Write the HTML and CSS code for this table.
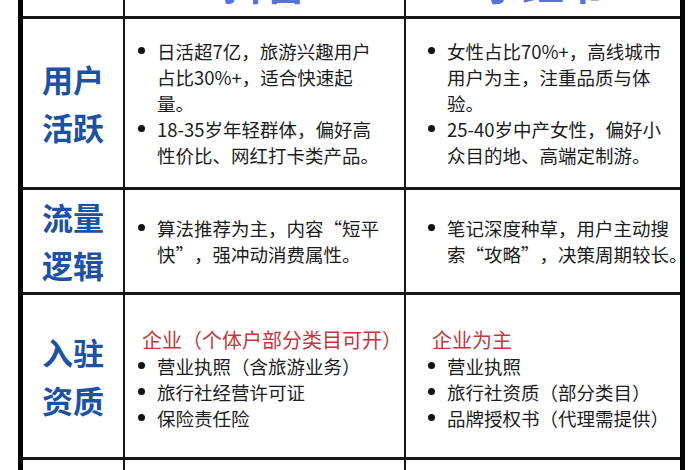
FILE: index.html
```html
<!DOCTYPE html>
<html lang="zh-CN">
<head>
<meta charset="utf-8">
<title>抖音 vs 小红书</title>
<link rel="stylesheet" href="styles.css">
</head>
<body>
<div class="sheet">
  <div class="cell head"></div>
  <div class="cell head">抖音</div>
  <div class="cell head">小红书</div>

  <div class="cell label">用户<br>活跃</div>
  <div class="cell body c2">
    <ul class="list">
      <li>日活超7亿，旅游兴趣用户<br>占比30%+，适合快速起<br>量。</li>
      <li>18-35岁年轻群体，偏好高<br>性价比、网红打卡类产品。</li>
    </ul>
  </div>
  <div class="cell body c3">
    <ul class="list">
      <li>女性占比70%+，高线城市<br>用户为主，注重品质与体<br>验。</li>
      <li>25-40岁中产女性，偏好小<br>众目的地、高端定制游。</li>
    </ul>
  </div>

  <div class="cell label">流量<br>逻辑</div>
  <div class="cell body c2">
    <ul class="list">
      <li>算法推荐为主，内容“短平<br>快”，强冲动消费属性。</li>
    </ul>
  </div>
  <div class="cell body c3">
    <ul class="list">
      <li>笔记深度种草，用户主动搜<br>索“攻略”，决策周期较长。</li>
    </ul>
  </div>

  <div class="cell label">入驻<br>资质</div>
  <div class="cell body c2 shift">
    <p class="req">企业（个体户部分类目可开）</p>
    <ul class="list">
      <li>营业执照（含旅游业务）</li>
      <li>旅行社经营许可证</li>
      <li>保险责任险</li>
    </ul>
  </div>
  <div class="cell body c3 shift">
    <p class="req">企业为主</p>
    <ul class="list">
      <li>营业执照</li>
      <li>旅行社资质（部分类目）</li>
      <li>品牌授权书（代理需提供）</li>
    </ul>
  </div>

  <div class="cell"></div>
  <div class="cell"></div>
  <div class="cell"></div>
</div>
</body>
</html>
```

FILE: styles.css
```css
* {
  box-sizing: border-box;
  margin: 0;
  padding: 0;
}

html, body {
  background: #ffffff;
}

body {
  margin: 0;
  overflow: hidden;
  font-family: "Noto Sans CJK SC", "Noto Sans", sans-serif;
  color: #1c1c1c;
}

.sheet {
  width: 667px;
  margin: -60px 0 0 18px;
  display: grid;
  grid-template-columns: 100px 279px 274px;
  grid-template-rows: 76px 168px 102px 162px 60px;
  gap: 3px 2px;
  background: #161616;
  border-left: 5px solid #050505;
  border-right: 5px solid #050505;
}

.cell {
  background: #ffffff;
  min-width: 0;
}

.head {
  display: flex;
  justify-content: center;
  align-items: flex-end;
  padding-bottom: 13px;
  font-size: 42px;
  line-height: 42px;
  font-weight: 700;
  color: #5670de;
}

.label {
  display: flex;
  align-items: center;
  justify-content: center;
  text-align: center;
  font-size: 31px;
  line-height: 48px;
  font-weight: 700;
  color: #1c51a3;
}

.body {
  display: flex;
  flex-direction: column;
  justify-content: center;
  font-size: 18.5px;
  line-height: 26px;
  white-space: nowrap;
  text-spacing-trim: space-all;
}

.c2 {
  padding-left: 13px;
}

.c3 {
  padding-left: 22px;
}

.shift {
  padding-top: 4px;
}

.list {
  list-style: none;
}

.list li {
  display: flex;
  align-items: flex-start;
}

.list li::before {
  content: "";
  flex: none;
  width: 7px;
  height: 7px;
  border-radius: 50%;
  background: #111111;
  margin: 9px 12px 0 0;
}

.req {
  margin-left: 4px;
  font-size: 20px;
  line-height: 27px;
  color: #c4363c;
}
```
